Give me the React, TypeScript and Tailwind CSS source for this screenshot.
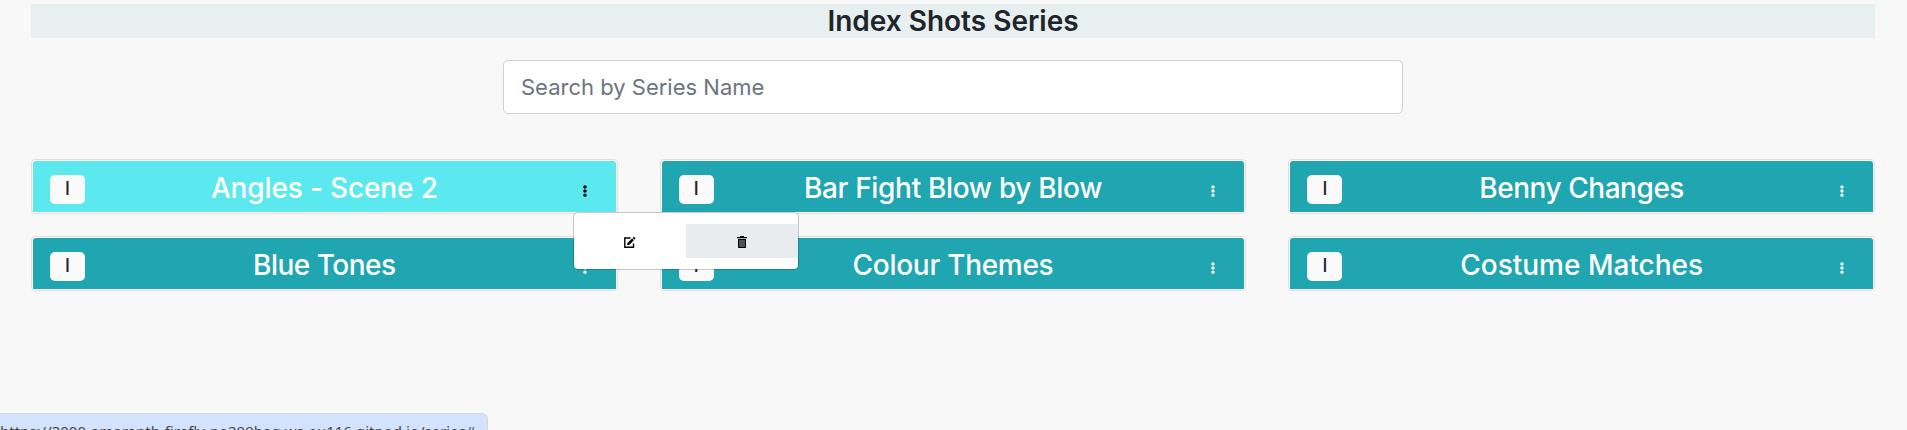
import { FaEllipsisV } from "react-icons/fa";

type Series = { name: string; active?: boolean; tracking: string };

const series: Series[] = [
  { name: "Angles - Scene 2", active: true, tracking: "tracking-[-0.15px]" },
  { name: "Bar Fight Blow by Blow", tracking: "tracking-[-0.33px]" },
  { name: "Benny Changes", tracking: "tracking-[-0.46px]" },
  { name: "Blue Tones", tracking: "tracking-[-0.5px]" },
  { name: "Colour Themes", tracking: "tracking-[-0.28px]" },
  { name: "Costume Matches", tracking: "tracking-[0px]" },
];

function EditIcon() {
  return (
    <svg viewBox="0 0 12 12" className="h-[12px] w-[12px]" fill="none" stroke="currentColor">
      <path d="M6.5 2H.8v9.2h8.7V7.5" strokeWidth="1.4" />
      <path d="M4.3 8 9 3.3" strokeWidth="2.6" />
      <path d="M3.1 9.2 3.6 6.8 5.5 8.7Z" fill="currentColor" stroke="none" />
      <path d="m9.5 2.8 1.3-1.3" strokeWidth="2.4" />
    </svg>
  );
}

function TrashIcon() {
  return (
    <svg viewBox="0 0 12 12" className="h-[12px] w-[12px]">
      <path d="M4 0h4v1h3v1.3H1V1h3Z" fill="currentColor" />
      <path d="M2 3h8v8.2a.8.8 0 0 1-.8.8H2.8a.8.8 0 0 1-.8-.8Z" fill="currentColor" />
      <path d="M4 4v7M6 4v7M8 4v7" stroke="#a0a2a5" strokeWidth="1" />
    </svg>
  );
}

function ActionMenu() {
  return (
    <div className="absolute top-[52px] left-[541px] z-10 flex h-[58px] w-[226px] rounded-[5px] border border-black/20 bg-white bg-clip-padding py-[11px] text-black">
      <a className="flex flex-1 items-center justify-center pt-[2px]">
        <EditIcon />
      </a>
      <a className="flex flex-1 items-center justify-center bg-[#e9ecef] pt-[2px]">
        <TrashIcon />
      </a>
    </div>
  );
}

function SeriesCard({ name, active, tracking }: Series) {
  return (
    <div className="relative h-[55px] rounded-[4px] border border-[#dfdfdf] bg-[#fdfdfd] p-px">
      <div
        className={`flex h-[51px] items-center rounded-t-[3px] pl-[17px] ${active ? "bg-[#5ce8ef]" : "bg-[#1fa6b0]"}`}
      >
        <span className="mt-[5px] flex h-[29px] w-[35px] items-center justify-center rounded-[5px] bg-[#fafafa] pb-[2px] text-[18px] font-medium text-[#212529]">
          I
        </span>
        <h5
          className={`mt-[2px] flex-1 pr-[13px] text-center text-[28px] leading-none font-medium whitespace-nowrap text-white ${tracking}`}
        >
          {name}
        </h5>
        <span
          className={`mt-[8px] mr-[23px] flex w-[16px] justify-center ${active ? "text-black" : "text-[#f7f7f7]"}`}
        >
          <FaEllipsisV className="h-[12px] w-[12px]" />
        </span>
      </div>
      {active && <ActionMenu />}
    </div>
  );
}

export default function App() {
  return (
    <main className="relative h-[430px] overflow-hidden bg-[#f8f8f8] pt-[4px] pr-[32px] pl-[31px] font-['Inter',sans-serif]">
      <h1 className="flex h-[34px] items-center justify-center bg-[#e7eff1] text-[28px] leading-none font-semibold text-[#212529]">
        Index Shots Series
      </h1>
      <div className="mx-auto mt-[22px] flex h-[54px] w-[900px] items-center rounded-[5px] border border-[#ced4da] bg-white px-[17px]">
        <input
          className="w-full text-[22px] outline-none placeholder:text-[#6c757d]"
          placeholder="Search by Series Name"
        />
      </div>
      <section className="mt-[45px] grid grid-cols-3 gap-x-[42px] gap-y-[22px]">
        {series.map((s) => (
          <SeriesCard key={s.name} {...s} />
        ))}
      </section>
      <div className="absolute top-[413px] left-[-1px] h-[30px] w-[489px] rounded-tr-[6px] border border-[#d5d9de] bg-[#d3e3fd] pt-[6px] font-['Noto_Sans',sans-serif] text-[15px] leading-[22px] whitespace-nowrap text-[#474747]">
        https://3000-amaranth-firefly-no299bag.ws-eu116.gitpod.io/series#
      </div>
    </main>
  );
}
